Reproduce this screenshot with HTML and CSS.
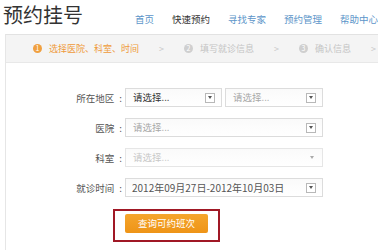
FILE: index.html
```html
<!DOCTYPE html>
<html lang="zh-CN">

<head>
  <meta charset="UTF-8" />
  <title>预约挂号</title>
  <link rel="stylesheet" href="styles.css">
</head>

<body>
  <header class="top">
    <h1 class="title">预约挂号</h1>
    <nav class="nav">
      <a>首页</a>
      <a class="current">快速预约</a>
      <a>寻找专家</a>
      <a>预约管理</a>
      <a>帮助中心</a>
    </nav>
  </header>

  <section class="panel">
    <div class="steps">
      <div class="step active"><span class="num">1</span>选择医院、科室、时间</div>
      <span class="sep">&gt;</span>
      <div class="step"><span class="num">2</span>填写就诊信息</div>
      <span class="sep">&gt;</span>
      <div class="step"><span class="num">3</span>确认信息</div>
      <span class="sep">&gt;</span>
    </div>

    <form class="form">
      <div class="row">
        <label>所在地区<span class="colon">:</span></label>
        <div class="pair">
          <div class="select half dark">请选择...<span class="arrow box"></span></div>
          <div class="select half">请选择...<span class="arrow box"></span></div>
        </div>
      </div>
      <div class="row">
        <label>医院<span class="colon">:</span></label>
        <div class="select">请选择...<span class="arrow box"></span></div>
      </div>
      <div class="row">
        <label>科室<span class="colon">:</span></label>
        <div class="select disabled">请选择...<span class="arrow"></span></div>
      </div>
      <div class="row">
        <label>就诊时间<span class="colon">:</span></label>
        <div class="select date">2012年09月27日-2012年10月03日<span class="arrow box"></span></div>
      </div>
      <div class="actions">
        <div class="mark">
          <button type="button" class="btn">查询可约班次</button>
        </div>
      </div>
    </form>
  </section>
</body>

</html>
```

FILE: styles.css
```css
body {
  margin: 0;
  font-family: "Noto Sans CJK SC", "Noto Sans", sans-serif;
  background-color: #fff;
  color: #333;
  overflow: hidden;
}

.top {
  display: flex;
  align-items: center;
  height: 34px;
  padding-left: 3px;
}

.title {
  margin: 0;
  font-size: 20px;
  font-weight: 400;
  color: #333;
  line-height: 24px;
  margin-top: -4px;
  width: 140px;
}

.nav {
  display: flex;
  gap: 18px;
  font-size: 9.5px;
  white-space: nowrap;
  margin-top: 4px;
}

.nav a {
  color: #5c95c9;
}

.nav a.current {
  color: #333;
}

.panel {
  margin-left: 5px;
  border-left: 1px solid #e6e6e6;
  border-top: 1px solid #e2e2e2;
  height: 215px;
}

.steps {
  display: flex;
  align-items: center;
  height: 27px;
  background-color: #f4f4f4;
  border-bottom: 1px solid #e8e8e8;
  padding-left: 27px;
  font-size: 9px;
  color: #c4c4c4;
  white-space: nowrap;
  overflow: hidden;
}

.step {
  display: flex;
  align-items: center;
}

.step .num {
  display: inline-block;
  width: 9px;
  height: 9px;
  border-radius: 50%;
  background-color: #cfcfcf;
  color: #fff;
  font-size: 7px;
  line-height: 9px;
  text-align: center;
  margin-right: 7px;
}

.step.active {
  color: #ef9a3a;
}

.step.active .num {
  background-color: #f0a040;
}

.sep {
  margin: 0 20px 0 20px;
  color: #c8c8c8;
}

.form {
  padding-top: 25px;
}

.row {
  display: flex;
  align-items: center;
  height: 19px;
  margin-bottom: 11px;
}

.row label {
  width: 118px;
  text-align: right;
  font-size: 9.5px;
  color: #555;
  padding-right: 1px;
}

.colon {
  margin: 0 2px 0 5px;
}

.pair {
  display: flex;
  gap: 3px;
}

.select {
  position: relative;
  box-sizing: border-box;
  width: 198px;
  height: 19px;
  border: 1px solid #dcdcdc;
  background: linear-gradient(#fafafa, #fff);
  font-size: 9.5px;
  line-height: 17px;
  padding-left: 7px;
  color: #a8a8a8;
}

.select.half {
  width: 97px;
}

.select.half + .select.half {
  width: 98px;
}

.select.dark {
  color: #333;
}

.select.date {
  color: #555;
  font-size: 10px;
  padding-left: 6px;
}

.select.disabled {
  color: #c8c8c8;
  border-color: #e6e6e6;
}

.arrow {
  position: absolute;
  right: 6px;
  top: 4px;
  width: 8px;
  height: 8px;
}

.arrow::after {
  content: "";
  position: absolute;
  left: 2px;
  top: 3px;
  border-left: 2px solid transparent;
  border-right: 2px solid transparent;
  border-top: 3px solid #555;
}

.arrow.box {
  border: 1px solid #b8b8b8;
  background-color: #fff;
}

.arrow.box::after {
  left: 2px;
  top: 2px;
}

.select.disabled .arrow::after {
  border-top-color: #aaa;
}

.actions {
  padding-left: 107px;
  margin-top: 2px;
}

.mark {
  display: inline-block;
  border: 2px solid #a01825;
  padding: 3px 10px 7px;
}

.btn {
  display: block;
  width: 83px;
  height: 19px;
  border: 0;
  border-radius: 2px;
  background: linear-gradient(#f5a52c, #ee9417);
  color: #fff;
  font-family: "Noto Sans CJK SC", sans-serif;
  font-size: 9.5px;
  padding: 0;
}
```
